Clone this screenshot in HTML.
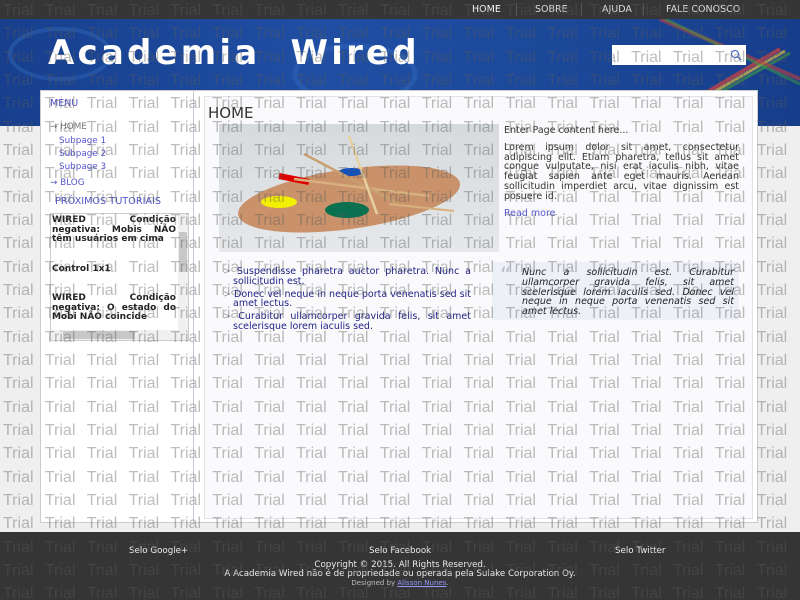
<!DOCTYPE html>
<html><head><meta charset="utf-8"><style>
*{margin:0;padding:0;box-sizing:border-box}
body{width:800px;height:600px;overflow:hidden;background:#efefef;font-family:"DejaVu Sans",sans-serif;position:relative}
#nav{position:absolute;left:0;top:0;width:800px;height:19px;background:#363636;}
#nav span{position:absolute;top:4px;font-size:9.5px;color:#ddd}
#nav i{position:absolute;top:3px;width:1px;height:13px;background:#555}
#hdr{position:absolute;left:0;top:19px;width:800px;height:107px;background:linear-gradient(90deg,#173f8e 0%,#1f4ea3 40%,#1c4899 70%,#163d8a 100%)}
#logo{position:absolute;left:48px;top:14px;font:bold 34px "DejaVu Sans",sans-serif;color:#fff;letter-spacing:3.2px;white-space:nowrap}
#search{position:absolute;left:612px;top:45px;width:134px;height:20px;background:#fff}
#wrap{position:absolute;left:40px;top:90px;width:718px;height:433px;background:#fff;border:1px solid #ccc}
#side{position:absolute;left:0;top:0;width:153px;height:431px;border-right:1px solid #c8c8d8}
.s{position:absolute;font-size:8.8px;color:#5555cc}
#box{position:absolute;left:9px;top:122px;width:139px;height:128px;border:1px solid #ccc;background:#fff;font-size:9px;font-weight:bold;color:#222}
#main{position:absolute;left:163px;top:5px;width:549px;height:423px;border:1px solid #e3e3e8;background:#fafafc}
#foot{position:absolute;left:0;top:532px;width:800px;height:68px;background:#353535;color:#eee;font-size:8.7px}
#wm{position:absolute;left:3px;top:-1px;width:830px;height:601px;overflow:hidden;font:16px "Liberation Sans",sans-serif;line-height:23.33px;color:rgba(90,90,90,0.4);word-spacing:7.2px;white-space:nowrap;pointer-events:none}
.t{font-size:9.5px;line-height:9.8px}
</style></head><body>
<div id="nav">
<span style="left:472px;color:#fff">HOME</span><i style="left:516px"></i>
<span style="left:535px">SOBRE</span><i style="left:581px"></i>
<span style="left:602px">AJUDA</span><i style="left:643px"></i>
<span style="left:666px">FALE CONOSCO</span>
</div>
<div id="hdr">
<svg width="800" height="107" style="position:absolute;left:0;top:0">
<ellipse cx="355" cy="55" rx="60" ry="28" fill="none" stroke="#2d63b8" stroke-width="5" opacity=".6"/>
<ellipse cx="60" cy="35" rx="50" ry="25" fill="none" stroke="#2d63b8" stroke-width="4" opacity=".5"/>
<path d="M650 107 L780 30" stroke="#d84040" stroke-width="4" opacity=".7"/>
<path d="M655 107 L785 32" stroke="#e0c040" stroke-width="3" opacity=".7"/>
<path d="M660 107 L790 34" stroke="#40a040" stroke-width="3" opacity=".6"/>
<path d="M660 0 L800 60" stroke="#c04040" stroke-width="4" opacity=".6"/>
<path d="M665 0 L800 65" stroke="#40a040" stroke-width="3" opacity=".5"/>
</svg>
<div id="logo">Academia&nbsp; Wired</div>
</div>
<div id="search"><svg width="12" height="12" style="position:absolute;right:4px;top:4px"><circle cx="5" cy="5" r="3.5" fill="none" stroke="#5577cc" stroke-width="1.3"/><path d="M7.5 7.5 L11 11" stroke="#5577cc" stroke-width="1.5"/></svg></div>
<div id="wrap">
<div id="side">
<div class="s" style="left:9px;top:7px;font-size:9.5px">MENU</div>
<div class="s" style="left:9px;top:31px;color:#777">→ HOME</div>
<div class="s" style="left:18px;top:45px">Subpage 1</div>
<div class="s" style="left:18px;top:58px">Subpage 2</div>
<div class="s" style="left:18px;top:71px">Subpage 3</div>
<div class="s" style="left:9px;top:87px">→ BLOG</div>
<div class="s" style="left:14px;top:105px;font-size:9.7px">PRÓXIMOS TUTORIAIS</div>
<div id="box">
<div style="position:absolute;left:0;top:0;width:125px;padding:2px 0 0 1px;text-align:justify;line-height:9.5px">WIRED Condição negativa: Mobis NÃO têm usuários em cima</div>
<div style="position:absolute;left:1px;top:50px">Control 1x1</div>
<div style="position:absolute;left:0;top:80px;width:125px;padding-left:1px;text-align:justify;line-height:9.5px">WIRED Condição negativa: O estado do Mobi NÃO coincide</div>
<div style="position:absolute;right:0;top:0;width:10px;height:116px;background:#f0f0f0"><div style="position:absolute;left:1px;top:18px;width:8px;height:40px;background:#c8c8c8"></div></div>
<div style="position:absolute;left:0;bottom:0;width:137px;height:10px;background:#f0f0f0"><div style="position:absolute;left:12px;top:1px;width:72px;height:8px;background:#c8c8c8"></div></div>
</div>
</div>
<div id="main">
<div style="position:absolute;left:3px;top:7px;font:15px 'DejaVu Sans',sans-serif;color:#333">HOME</div>
<div style="position:absolute;left:14px;top:27px;width:280px;height:128px;background:linear-gradient(#d6dadd,#e6e8ea)">
<svg width="280" height="128">
<ellipse cx="130" cy="75" rx="112" ry="30" fill="#c9926a" transform="rotate(-8 130 75)"/>
<ellipse cx="60" cy="78" rx="18" ry="6" fill="#f2f000"/>
<ellipse cx="128" cy="86" rx="22" ry="8" fill="#0a7050"/>
<ellipse cx="132" cy="48" rx="12" ry="4" fill="#1050c0"/>
<path d="M60 52 L90 58" stroke="#e00000" stroke-width="6"/>
<path d="M75 55 L210 72" stroke="#d8b080" stroke-width="2.5"/>
<path d="M85 30 L180 80" stroke="#c8a070" stroke-width="2.5"/>
<path d="M130 12 L158 90" stroke="#e8d0a0" stroke-width="2.5"/>
<path d="M170 80 L235 87" stroke="#d8b080" stroke-width="2"/>
</svg></div>
<div class="t" style="position:absolute;left:299px;top:29px;width:235px;color:#333;text-align:justify">
<p>Enter Page content here...</p>
<p style="margin-top:7px">Lorem ipsum dolor sit amet, consectetur adipiscing elit. Etiam pharetra, tellus sit amet congue vulputate, nisi erat iaculis nibh, vitae feugiat sapien ante eget mauris. Aenean sollicitudin imperdiet arcu, vitae dignissim est posuere id.</p>
<p style="margin-top:7px;color:#5555cc">Read more</p></div>
<div class="t" style="position:absolute;left:18px;top:170px;width:248px;color:#222288;text-align:justify">
<p style="padding-left:10px;text-indent:-10px"><span style="color:#99a">&gt;</span> Suspendisse pharetra auctor pharetra. Nunc a sollicitudin est.</p>
<p style="padding-left:10px;text-indent:-10px;margin-top:3px"><span style="color:#99a">&gt;</span> Donec vel neque in neque porta venenatis sed sit amet lectus.</p>
<p style="padding-left:10px;text-indent:-10px;margin-top:3px"><span style="color:#99a">&gt;</span> Curabitur ullamcorper gravida felis, sit amet scelerisque lorem iaculis sed.</p></div>
<div style="position:absolute;left:287px;top:165px;width:247px;height:58px;background:#eef0f8">
<div style="position:absolute;left:8px;top:2px;font-size:22px;color:#bbc">“</div>
<div class="t" style="position:absolute;left:30px;top:6px;width:212px;font-style:italic;color:#222;text-align:justify">Nunc a sollicitudin est. Curabitur ullamcorper gravida felis, sit amet scelerisque lorem iaculis sed. Donec vel neque in neque porta venenatis sed sit amet lectus.</div></div>
</div>
</div>
<div id="foot">
<div style="position:absolute;left:129px;top:14px">Selo Google+</div>
<div style="position:absolute;left:369px;top:14px">Selo Facebook</div>
<div style="position:absolute;left:615px;top:14px">Selo Twitter</div>
<div style="position:absolute;left:0;top:29px;width:800px;text-align:center;line-height:9px">Copyright © 2015. All Rights Reserved.<br>A Academia Wired não é de propriedade ou operada pela Sulake Corporation Oy.<br><span style="font-size:7px;color:#bbb">Designed by <u style="color:#99f">Alisson Nunes</u>.</span></div>
</div>
<div id="wm">
Trial Trial Trial Trial Trial Trial Trial Trial Trial Trial Trial Trial Trial Trial Trial Trial Trial Trial Trial<br>
Trial Trial Trial Trial Trial Trial Trial Trial Trial Trial Trial Trial Trial Trial Trial Trial Trial Trial Trial<br>
Trial Trial Trial Trial Trial Trial Trial Trial Trial Trial Trial Trial Trial Trial Trial Trial Trial Trial Trial<br>
Trial Trial Trial Trial Trial Trial Trial Trial Trial Trial Trial Trial Trial Trial Trial Trial Trial Trial Trial<br>
Trial Trial Trial Trial Trial Trial Trial Trial Trial Trial Trial Trial Trial Trial Trial Trial Trial Trial Trial<br>
Trial Trial Trial Trial Trial Trial Trial Trial Trial Trial Trial Trial Trial Trial Trial Trial Trial Trial Trial<br>
Trial Trial Trial Trial Trial Trial Trial Trial Trial Trial Trial Trial Trial Trial Trial Trial Trial Trial Trial<br>
Trial Trial Trial Trial Trial Trial Trial Trial Trial Trial Trial Trial Trial Trial Trial Trial Trial Trial Trial<br>
Trial Trial Trial Trial Trial Trial Trial Trial Trial Trial Trial Trial Trial Trial Trial Trial Trial Trial Trial<br>
Trial Trial Trial Trial Trial Trial Trial Trial Trial Trial Trial Trial Trial Trial Trial Trial Trial Trial Trial<br>
Trial Trial Trial Trial Trial Trial Trial Trial Trial Trial Trial Trial Trial Trial Trial Trial Trial Trial Trial<br>
Trial Trial Trial Trial Trial Trial Trial Trial Trial Trial Trial Trial Trial Trial Trial Trial Trial Trial Trial<br>
Trial Trial Trial Trial Trial Trial Trial Trial Trial Trial Trial Trial Trial Trial Trial Trial Trial Trial Trial<br>
Trial Trial Trial Trial Trial Trial Trial Trial Trial Trial Trial Trial Trial Trial Trial Trial Trial Trial Trial<br>
Trial Trial Trial Trial Trial Trial Trial Trial Trial Trial Trial Trial Trial Trial Trial Trial Trial Trial Trial<br>
Trial Trial Trial Trial Trial Trial Trial Trial Trial Trial Trial Trial Trial Trial Trial Trial Trial Trial Trial<br>
Trial Trial Trial Trial Trial Trial Trial Trial Trial Trial Trial Trial Trial Trial Trial Trial Trial Trial Trial<br>
Trial Trial Trial Trial Trial Trial Trial Trial Trial Trial Trial Trial Trial Trial Trial Trial Trial Trial Trial<br>
Trial Trial Trial Trial Trial Trial Trial Trial Trial Trial Trial Trial Trial Trial Trial Trial Trial Trial Trial<br>
Trial Trial Trial Trial Trial Trial Trial Trial Trial Trial Trial Trial Trial Trial Trial Trial Trial Trial Trial<br>
Trial Trial Trial Trial Trial Trial Trial Trial Trial Trial Trial Trial Trial Trial Trial Trial Trial Trial Trial<br>
Trial Trial Trial Trial Trial Trial Trial Trial Trial Trial Trial Trial Trial Trial Trial Trial Trial Trial Trial<br>
Trial Trial Trial Trial Trial Trial Trial Trial Trial Trial Trial Trial Trial Trial Trial Trial Trial Trial Trial<br>
Trial Trial Trial Trial Trial Trial Trial Trial Trial Trial Trial Trial Trial Trial Trial Trial Trial Trial Trial<br>
Trial Trial Trial Trial Trial Trial Trial Trial Trial Trial Trial Trial Trial Trial Trial Trial Trial Trial Trial<br>
Trial Trial Trial Trial Trial Trial Trial Trial Trial Trial Trial Trial Trial Trial Trial Trial Trial Trial Trial<br>
</div>
</body></html>
